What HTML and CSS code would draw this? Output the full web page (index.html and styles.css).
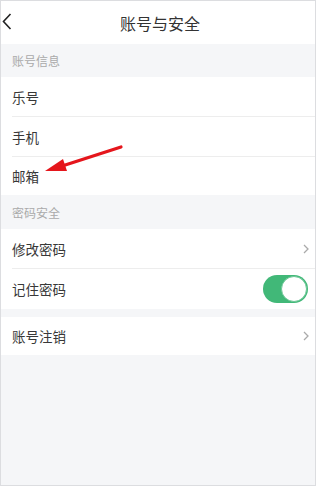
FILE: index.html
```html
<!DOCTYPE html>
<html lang="zh">
<head>
<meta charset="utf-8">
<link rel="stylesheet" href="styles.css">
</head>
<body>
<div class="screen">
  <header class="nav">
    <svg class="back" width="14" height="20" viewBox="0 0 14 20"><path d="M9.5 3 L2.5 10.5 L9.5 18" fill="none" stroke="#222" stroke-width="1.6"/></svg>
    <div class="title">账号与安全</div>
  </header>
  <div class="sec">账号信息</div>
  <div class="group">
    <div class="row"><span>乐号</span></div>
    <div class="row line"><span>手机</span></div>
    <div class="row line short"><span>邮箱</span></div>
  </div>
  <div class="sec sec2">密码安全</div>
  <div class="group">
    <div class="row"><span>修改密码</span><svg class="chev" width="8" height="12" viewBox="0 0 8 12"><path d="M2 2 L6 6 L2 10" fill="none" stroke="#aaa" stroke-width="1.3"/></svg></div>
    <div class="row line tall"><span>记住密码</span><div class="toggle"><div class="knob"></div></div></div>
  </div>
  <div class="group gap">
    <div class="row short"><span>账号注销</span><svg class="chev" width="8" height="12" viewBox="0 0 8 12"><path d="M2 2 L6 6 L2 10" fill="none" stroke="#aaa" stroke-width="1.3"/></svg></div>
  </div>
  <svg class="arrow" width="90" height="40" viewBox="0 0 90 40"><path d="M86 6 L24 26" stroke="#e5161c" stroke-width="3.2" stroke-linecap="round"/><path d="M10 30 L28 18 L32 30 Z" fill="#e5161c"/></svg>
</div>
</body>
</html>
```
FILE: styles.css
```css
html, body { margin: 0; padding: 0; background: #fff; }
.screen {
  position: relative;
  width: 314px;
  height: 484px;
  border: 1px solid #dcdde0;
  background: #f5f6f8;
  font-family: "Noto Sans CJK SC", "Noto Sans", sans-serif;
  color: #333;
  display: flex;
  flex-direction: column;
}
.nav {
  height: 43px;
  background: #fff;
  display: flex;
  align-items: center;
  justify-content: center;
  position: relative;
}
.back { position: absolute; left: 0; top: 10px; }
.title { font-size: 16px; color: #333; padding-left: 4px; }
.sec {
  height: 33px;
  display: flex;
  align-items: center;
  padding-left: 11px;
  font-size: 12px;
  color: #aaa;
}
.sec2 { height: 34px; }
.group { background: #fff; }
.gap { margin-top: 8px; }
.row {
  height: 39px;
  display: flex;
  align-items: center;
  justify-content: space-between;
  padding-left: 11px;
  padding-right: 5px;
  font-size: 13.5px;
  color: #383838;
  position: relative;
}
.row.tall { height: 40px; }
.row.short { height: 38px; }
.row.line { border-top: 1px solid transparent; }
.row.line::before {
  content: "";
  position: absolute;
  left: 11px;
  right: 0;
  top: -1px;
  height: 1px;
  background: #ededed;
}
.toggle {
  width: 45px;
  height: 28px;
  border-radius: 14px;
  background: #41b878;
  position: relative;
  margin-right: 2px;
}
.knob {
  position: absolute;
  right: 1px;
  top: 1px;
  width: 24px;
  height: 24px;
  border-radius: 50%;
  background: #fff;
  border: 1px solid #6cc796;
}
.arrow { position: absolute; left: 34px; top: 140px; }
```
